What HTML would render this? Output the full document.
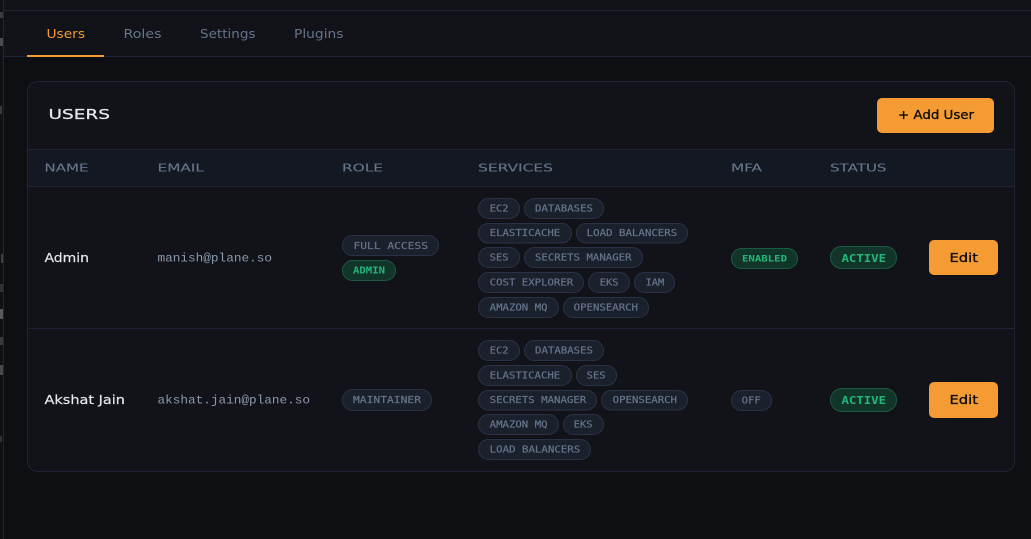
<!DOCTYPE html>
<html><head><meta charset="utf-8"><style>
html,body{margin:0;padding:0;background:#0e0f12;width:1031px;height:539px;overflow:hidden}
svg{display:block}
.s{font-family:"DejaVu Sans","Liberation Sans",sans-serif}
.m{font-family:"Liberation Mono","DejaVu Sans Mono",monospace}
.c rect{fill:#1a202c;stroke:#2a3346;stroke-width:1}
.c text{font-family:"DejaVu Sans Mono","Liberation Mono",monospace;font-size:9.6px;fill:#64748b;stroke:#64748b;stroke-width:.22}
.g rect{fill:#12352a;stroke:#1c5a42;stroke-width:1}
.g text{font-family:"DejaVu Sans Mono","Liberation Mono",monospace;fill:#22b87a;font-weight:bold}
.h{font-family:"DejaVu Sans","Liberation Sans",sans-serif;font-size:10.2px;fill:#64748b;stroke:#64748b;stroke-width:.12}
</style></head><body>
<svg width="1031" height="539" viewBox="0 0 1031 539" xmlns="http://www.w3.org/2000/svg">
<rect width="1031" height="539" fill="#0e0f12"/>
<rect x="4" y="0" width="1027" height="56" fill="#111318"/>
<rect x="0" y="0" width="3" height="539" fill="#101114"/>
<rect x="3" y="0" width="1" height="539" fill="#24262b"/>
<rect x="4" y="10" width="1027" height="1" fill="#1e2433"/>
<rect x="4" y="56" width="1027" height="1" fill="#1e2433"/>
<rect x="27" y="55" width="77" height="2" fill="#f49b33"/>
<g>
<rect x="0" y="12" width="3" height="6" fill="#3a3b3e"/><rect x="0" y="38" width="3" height="8" fill="#4a4b4e"/>
<rect x="0" y="106" width="2" height="8" fill="#3a3b3e"/><rect x="1" y="254" width="2" height="9" fill="#3f4043"/>
<rect x="0" y="284" width="3" height="8" fill="#303134"/><rect x="0" y="309" width="3" height="10" fill="#58595c"/>
<rect x="0" y="337" width="3" height="8" fill="#3a3b3e"/><rect x="0" y="365" width="3" height="10" fill="#48494c"/>
<rect x="0" y="436" width="2" height="6" fill="#303134"/>
</g>
<g class="s" font-size="12.3">
<text x="46.5" y="38" fill="#f49b33" textLength="38.5" lengthAdjust="spacingAndGlyphs">Users</text>
<text x="123.5" y="38" fill="#64748b" textLength="38" lengthAdjust="spacingAndGlyphs">Roles</text>
<text x="200" y="38" fill="#64748b" textLength="55.5" lengthAdjust="spacingAndGlyphs">Settings</text>
<text x="294" y="38" fill="#64748b" textLength="49.5" lengthAdjust="spacingAndGlyphs">Plugins</text>
</g>
<rect x="27.5" y="81.5" width="987" height="390" rx="10" fill="#111318" stroke="#1e2433"/>
<text class="s" x="48.5" y="119" font-size="13.5" fill="#e6e8ee" stroke="#e6e8ee" stroke-width=".25" textLength="61.5" lengthAdjust="spacingAndGlyphs">USERS</text>
<rect x="877" y="98" width="117" height="35" rx="5" fill="#f49b33"/>
<text class="s" x="898" y="119" font-size="12" fill="#0b0b0b" stroke="#0b0b0b" stroke-width=".3" textLength="76" lengthAdjust="spacingAndGlyphs">+ Add User</text>
<rect x="28" y="149" width="986" height="38" fill="#141822"/>
<rect x="28" y="149" width="986" height="1" fill="#1e2433"/>
<rect x="28" y="186" width="986" height="1" fill="#1e2433"/>
<rect x="28" y="328" width="986" height="1" fill="#1e2433"/>
<g>
<text class="h" x="44.5" y="171.5" textLength="44" lengthAdjust="spacingAndGlyphs">NAME</text>
<text class="h" x="157.5" y="171.5" textLength="46.5" lengthAdjust="spacingAndGlyphs">EMAIL</text>
<text class="h" x="342" y="171.5" textLength="41" lengthAdjust="spacingAndGlyphs">ROLE</text>
<text class="h" x="478" y="171.5" textLength="75" lengthAdjust="spacingAndGlyphs">SERVICES</text>
<text class="h" x="731" y="171.5" textLength="31" lengthAdjust="spacingAndGlyphs">MFA</text>
<text class="h" x="830" y="171.5" textLength="56.5" lengthAdjust="spacingAndGlyphs">STATUS</text>
</g>
<g class="s" font-size="12.5" fill="#e6e8ee" stroke="#e6e8ee" stroke-width=".2">
<text x="44.5" y="262" textLength="44.5" lengthAdjust="spacingAndGlyphs">Admin</text>
<text x="44.5" y="404" textLength="80.5" lengthAdjust="spacingAndGlyphs">Akshat Jain</text>
</g>
<g class="m" font-size="12" fill="#8b99ad">
<text x="157.5" y="261.5" textLength="114.5" lengthAdjust="spacingAndGlyphs">manish@plane.so</text>
<text x="157.5" y="403.5" textLength="152.5" lengthAdjust="spacingAndGlyphs">akshat.jain@plane.so</text>
</g>
<g class="c">
<rect x="342.5" y="235.5" width="96" height="20" rx="10"/><text x="353.5" y="248.8" textLength="74.5" lengthAdjust="spacingAndGlyphs">FULL ACCESS</text>
<rect x="478.5" y="198.5" width="41" height="20" rx="10"/><text x="489.7" y="211.5" textLength="18.8" lengthAdjust="spacingAndGlyphs">EC2</text>
<rect x="524.5" y="198.5" width="79" height="20" rx="10"/><text x="535" y="211.5" textLength="58" lengthAdjust="spacingAndGlyphs">DATABASES</text>
<rect x="478.5" y="223.5" width="93" height="19.5" rx="9.7"/><text x="489.7" y="236" textLength="70.5" lengthAdjust="spacingAndGlyphs">ELASTICACHE</text>
<rect x="576.5" y="223.5" width="111" height="19.5" rx="9.7"/><text x="586.7" y="236" textLength="90.5" lengthAdjust="spacingAndGlyphs">LOAD BALANCERS</text>
<rect x="478.5" y="247.5" width="41" height="20" rx="10"/><text x="489.7" y="260.5" textLength="18.8" lengthAdjust="spacingAndGlyphs">SES</text>
<rect x="524.5" y="247.5" width="118" height="20" rx="10"/><text x="535" y="260.5" textLength="96.5" lengthAdjust="spacingAndGlyphs">SECRETS MANAGER</text>
<rect x="478.5" y="272.5" width="105" height="20" rx="10"/><text x="489.7" y="285.5" textLength="83.5" lengthAdjust="spacingAndGlyphs">COST EXPLORER</text>
<rect x="588.5" y="272.5" width="41" height="20" rx="10"/><text x="599.7" y="285.5" textLength="18.8" lengthAdjust="spacingAndGlyphs">EKS</text>
<rect x="634.5" y="272.5" width="40" height="20" rx="10"/><text x="645.5" y="285.5" textLength="18.8" lengthAdjust="spacingAndGlyphs">IAM</text>
<rect x="478.5" y="297.5" width="80" height="20" rx="10"/><text x="489.7" y="310.5" textLength="57.8" lengthAdjust="spacingAndGlyphs">AMAZON MQ</text>
<rect x="563.5" y="297.5" width="85" height="20" rx="10"/><text x="573.7" y="310.5" textLength="64.3" lengthAdjust="spacingAndGlyphs">OPENSEARCH</text>

<rect x="342.5" y="389.5" width="89" height="21" rx="10.5"/><text x="353" y="403" textLength="68" lengthAdjust="spacingAndGlyphs">MAINTAINER</text>
<rect x="478.5" y="340.5" width="41" height="20" rx="10"/><text x="489.7" y="353.5" textLength="18.8" lengthAdjust="spacingAndGlyphs">EC2</text>
<rect x="524.5" y="340.5" width="79" height="20" rx="10"/><text x="535" y="353.5" textLength="58" lengthAdjust="spacingAndGlyphs">DATABASES</text>
<rect x="478.5" y="365.5" width="93" height="20" rx="10"/><text x="489.7" y="378.5" textLength="70.5" lengthAdjust="spacingAndGlyphs">ELASTICACHE</text>
<rect x="576.5" y="365.5" width="40" height="20" rx="10"/><text x="586.7" y="378.5" textLength="18.8" lengthAdjust="spacingAndGlyphs">SES</text>
<rect x="478.5" y="390.5" width="118" height="19.5" rx="9.7"/><text x="489.7" y="403" textLength="96.5" lengthAdjust="spacingAndGlyphs">SECRETS MANAGER</text>
<rect x="601.5" y="390.5" width="86" height="19.5" rx="9.7"/><text x="612.7" y="403" textLength="64.3" lengthAdjust="spacingAndGlyphs">OPENSEARCH</text>
<rect x="478.5" y="414.5" width="80" height="20" rx="10"/><text x="489.7" y="427.5" textLength="57.8" lengthAdjust="spacingAndGlyphs">AMAZON MQ</text>
<rect x="563.5" y="414.5" width="40" height="20" rx="10"/><text x="573.7" y="427.5" textLength="18.8" lengthAdjust="spacingAndGlyphs">EKS</text>
<rect x="478.5" y="439.5" width="112" height="20" rx="10"/><text x="489.7" y="452.5" textLength="90.5" lengthAdjust="spacingAndGlyphs">LOAD BALANCERS</text>
<rect x="731.5" y="390.5" width="40" height="20" rx="10"/><text x="741.7" y="403.5" textLength="19" lengthAdjust="spacingAndGlyphs">OFF</text>
</g>
<g class="g">
<rect x="342.5" y="260.5" width="53" height="20" rx="10"/><text x="353" y="273.5" font-size="9.6" textLength="32" lengthAdjust="spacingAndGlyphs">ADMIN</text>
<rect x="731.5" y="248.5" width="66" height="20" rx="10"/><text x="742" y="261.5" font-size="9" textLength="45" lengthAdjust="spacingAndGlyphs">ENABLED</text>
<rect x="830.5" y="246.5" width="66" height="22" rx="11"/><text x="841.5" y="261.8" font-size="10.5" textLength="44.5" lengthAdjust="spacingAndGlyphs">ACTIVE</text>
<rect x="830.5" y="388.5" width="66" height="23" rx="11.5"/><text x="841.5" y="404" font-size="10.5" textLength="44.5" lengthAdjust="spacingAndGlyphs">ACTIVE</text>
</g>
<rect x="929" y="240" width="69" height="35" rx="5" fill="#f49b33"/>
<rect x="929" y="382" width="69" height="36" rx="5" fill="#f49b33"/>
<g class="s" font-size="12" fill="#0b0b0b" stroke="#0b0b0b" stroke-width=".3">
<text x="949.5" y="262" textLength="28.5" lengthAdjust="spacingAndGlyphs">Edit</text>
<text x="949.5" y="404" textLength="28.5" lengthAdjust="spacingAndGlyphs">Edit</text>
</g>
</svg>
</body></html>
